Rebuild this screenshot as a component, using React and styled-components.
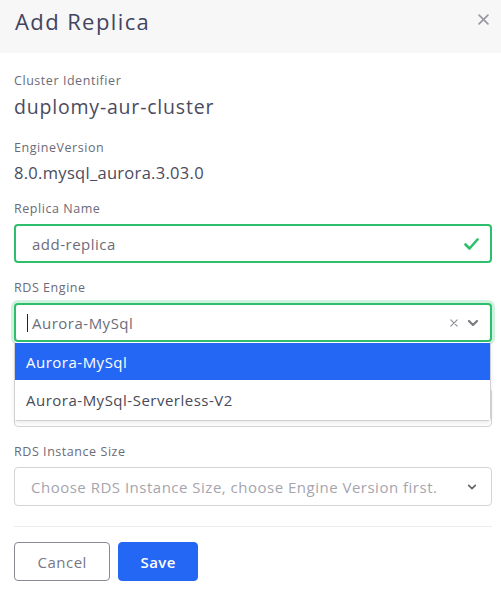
import React from 'react';
import styled, { createGlobalStyle } from 'styled-components';

const GlobalStyle = createGlobalStyle`
  body {
    margin: 0;
    background: #ffffff;
    font-family: "Open Sans", "Noto Sans", sans-serif;
  }
`;

const Modal = styled.div`
  width: 501px;
  background: #fff;
`;

const ModalHeader = styled.header`
  height: 53px;
  display: flex;
  align-items: flex-start;
  justify-content: space-between;
  padding: 6px 10px 0 15px;
  box-sizing: border-box;
  background: #f7f7f7;
`;

const Title = styled.h2`
  margin: 0;
  font-size: 22px;
  line-height: 30px;
  font-weight: 500;
  letter-spacing: 1.4px;
  color: #43445f;
`;

const CloseButton = styled.button`
  border: none;
  background: none;
  padding: 0;
  width: 16px;
  height: 16px;
  display: flex;
  align-items: center;
  justify-content: center;
  margin-top: 5px;
  cursor: pointer;
`;

const Body = styled.div`
  padding: 19px 9px 0 14px;
`;

const Group = styled.div`
  margin-bottom: ${p => p.gap ?? 16}px;
`;

const Label = styled.div`
  font-size: 12.5px;
  line-height: 18px;
  letter-spacing: 0.55px;
  color: #6b6b78;
`;

const Value = styled.div`
  margin-top: 4px;
  font-size: ${p => (p.large ? 19.5 : 16.5)}px;
  line-height: ${p => (p.large ? 26 : 24)}px;
  letter-spacing: ${p => (p.large ? 0.8 : 0.3)}px;
  color: #4b4b5e;
`;

const Control = styled.div`
  position: relative;
  margin-top: ${p => p.offset || 6}px;
  height: 39px;
  box-sizing: border-box;
  display: flex;
  align-items: center;
  padding: 0 ${p => (p.valid ? 11 : 14)}px 0 ${p => p.inset || 16}px;
  border: ${p => (p.valid ? '2px solid #2ebf6d' : '1px solid #d4d4d9')};
  border-radius: 4px;
  background: #fff;
  box-shadow: ${p => (p.focused ? '0 0 0 3px rgba(46, 191, 109, 0.22)' : 'none')};
`;

const ControlText = styled.span`
  flex: 1;
  display: flex;
  align-items: center;
  font-size: 15px;
  letter-spacing: 0.5px;
  color: ${p => (p.placeholder ? '#a5a5ae' : '#6d6d7a')};
  white-space: nowrap;
  overflow: hidden;
`;

const Caret = styled.span`
  display: inline-block;
  width: 1px;
  height: 18px;
  background: #222;
  margin-right: 4px;
`;

const Indicators = styled.div`
  display: flex;
  align-items: center;
  gap: 9px;
`;

const Menu = styled.ul`
  position: absolute;
  top: calc(100% + 2px);
  left: -2px;
  right: -1px;
  margin: 0;
  padding: 1px 0 0;
  list-style: none;
  background: #fff;
  border: 1px solid #cfcfd4;
  border-top: none;
  border-radius: 0 0 4px 4px;
  box-shadow: 0 2px 4px rgba(0, 0, 0, 0.08);
  z-index: 5;
`;

const Option = styled.li`
  height: ${p => (p.selected ? 37 : 40)}px;
  display: flex;
  align-items: center;
  padding-left: 11px;
  font-size: 15px;
  letter-spacing: 0.5px;
  color: ${p => (p.selected ? '#fff' : '#4a4a58')};
  background: ${p => (p.selected ? '#2467f4' : '#fff')};
`;

const Divider = styled.hr`
  margin: 20px 0 15px;
  border: none;
  border-top: 1px solid #ececef;
`;

const Actions = styled.div`
  display: flex;
  gap: 8px;
`;

const Button = styled.button`
  height: 39px;
  padding: 0 ${p => (p.primary ? 21 : 22.5)}px;
  border-radius: 4px;
  font-family: inherit;
  font-size: 15px;
  letter-spacing: 0.5px;
  font-weight: ${p => (p.primary ? 600 : 400)};
  color: ${p => (p.primary ? '#fff' : '#777783')};
  background: ${p => (p.primary ? '#2467f4' : '#fff')};
  border: 1px solid ${p => (p.primary ? '#2467f4' : '#8a8a92')};
  cursor: pointer;
`;

const Chevron = ({ color = '#777', size = 12, width = 2.2 }) => (
  <svg width={size} height={size} viewBox="0 0 12 12" fill="none">
    <path d="M2 4l4 4 4-4" stroke={color} strokeWidth={width} strokeLinecap="round" strokeLinejoin="round" />
  </svg>
);

const Cross = ({ color = '#999', size = 10, width = 1.5 }) => (
  <svg width={size} height={size} viewBox="0 0 10 10" fill="none">
    <path d="M1 1l8 8M9 1l-8 8" stroke={color} strokeWidth={width} strokeLinecap="round" />
  </svg>
);

const Check = () => (
  <svg width="15" height="12" viewBox="0 0 15 12" fill="none">
    <path d="M1.5 6.5l4 4 8-9" stroke="#2ebf6d" strokeWidth="2.6" strokeLinecap="round" strokeLinejoin="round" />
  </svg>
);

const App = () => {
  return (
    <Modal>
      <GlobalStyle />
      <ModalHeader>
        <Title>Add Replica</Title>
        <CloseButton aria-label="Close">
          <Cross color="#9a9aa3" size={11} width={1.6} />
        </CloseButton>
      </ModalHeader>

      <Body>
        <Group gap={19}>
          <Label>Cluster Identifier</Label>
          <Value large>duplomy-aur-cluster</Value>
        </Group>

        <Group gap={15}>
          <Label>EngineVersion</Label>
          <Value>8.0.mysql_aurora.3.03.0</Value>
        </Group>

        <Group>
          <Label>Replica Name</Label>
          <Control valid>
            <ControlText>add-replica</ControlText>
            <Check />
          </Control>
        </Group>

        {/* RDS Engine, menu open */}
        <Group gap={0}>
          <Label>RDS Engine</Label>
          <Control valid focused inset={11}>
            <ControlText>
              <Caret />
              Aurora-MySql
            </ControlText>
            <Indicators>
              <Cross color="#8e8e96" size={8} width={1.4} />
              <Chevron color="#7a7a82" />
            </Indicators>
            <Menu>
              <Option selected>Aurora-MySql</Option>
              <Option>Aurora-MySql-Serverless-V2</Option>
            </Menu>
          </Control>
        </Group>

        {/* field hidden behind the open menu */}
        <Group>
          <Control offset={46} />
        </Group>

        <Group gap={0}>
          <Label>RDS Instance Size</Label>
          <Control>
            <ControlText placeholder>Choose RDS Instance Size, choose Engine Version first.</ControlText>
            <Chevron color="#666" size={10} width={2} />
          </Control>
        </Group>

        <Divider />

        <Actions>
          <Button>Cancel</Button>
          <Button primary>Save</Button>
        </Actions>
      </Body>
    </Modal>
  );
};

export default App;
